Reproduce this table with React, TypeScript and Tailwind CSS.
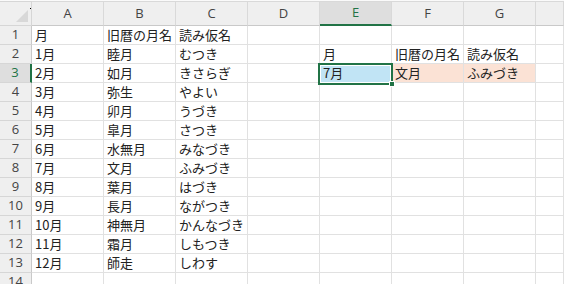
const columns = ['A', 'B', 'C', 'D', 'E', 'F', 'G', ''];

type Cell = { text?: string; fill?: string };

// シートの中身: 行番号 -> 列インデックス(0 = A) -> 値
const months = [
  ['1月', '睦月', 'むつき'],
  ['2月', '如月', 'きさらぎ'],
  ['3月', '弥生', 'やよい'],
  ['4月', '卯月', 'うづき'],
  ['5月', '皐月', 'さつき'],
  ['6月', '水無月', 'みなづき'],
  ['7月', '文月', 'ふみづき'],
  ['8月', '葉月', 'はづき'],
  ['9月', '長月', 'ながつき'],
  ['10月', '神無月', 'かんなづき'],
  ['11月', '霜月', 'しもつき'],
  ['12月', '師走', 'しわす'],
];

function buildRows(): Cell[][] {
  const rows: Cell[][] = [];
  for (let r = 0; r < 14; r++) {
    rows.push(columns.map(() => ({})));
  }
  rows[0][0] = { text: '月' };
  rows[0][1] = { text: '旧暦の月名' };
  rows[0][2] = { text: '読み仮名' };
  months.forEach((m, i) => {
    rows[i + 1][0] = { text: m[0] };
    rows[i + 1][1] = { text: m[1] };
    rows[i + 1][2] = { text: m[2] };
  });
  rows[1][4] = { text: '月' };
  rows[1][5] = { text: '旧暦の月名' };
  rows[1][6] = { text: '読み仮名' };
  rows[2][4] = { text: '7月', fill: 'bg-[#c1e4f5]' };
  rows[2][5] = { text: '文月', fill: 'bg-[#fbe2d5]' };
  rows[2][6] = { text: 'ふみづき', fill: 'bg-[#fbe2d5]' };
  return rows;
}

const ACTIVE_COL = 4;
const ACTIVE_ROW = 2;

export default function App() {
  const rows = buildRows();

  return (
    <div
      className="relative h-[284px] w-[564px] overflow-hidden bg-white text-[#222]"
      style={{ fontFamily: '"Noto Sans CJK JP", "Noto Sans", sans-serif' }}
    >
      <div className="h-[1px] bg-[#fafafa]" />
      <div className="grid grid-cols-[32px_repeat(7,72px)_1fr]">
        {/* 列見出し */}
        <div className="relative h-[25px] border-t border-r border-b border-[#d6d6d6] bg-[#efefef]">
          <div className="absolute right-[3px] bottom-[3px] h-[12px] w-[12px] bg-[#d8d8d8] [clip-path:polygon(100%_0,100%_100%,0_100%)]" />
          <div className="absolute left-[30px] top-[6px] h-[1px] w-[1px] bg-black" />
        </div>
        {columns.map((c, i) => (
          <div
            key={c || 'H'}
            className={`flex h-[25px] items-center justify-center border-t border-r border-[#d9d9d9] text-[13px] ${
              i === ACTIVE_COL
                ? 'border-b-2 border-b-[#217346] bg-[#dedede] text-[#217346]'
                : 'border-b border-b-[#c9c9c9] bg-[#efefef] text-[#444]'
            }`}
            style={{ fontFamily: '"Open Sans", "Liberation Sans", sans-serif' }}
          >
            {c}
          </div>
        ))}

        {rows.map((row, r) => (
          <Row key={r} index={r} cells={row} />
        ))}
      </div>

      {/* アクティブセル E3 の枠とフィルハンドル */}
      <div className="absolute left-[318px] top-[63px] h-[22px] w-[75px] border-2 border-[#217346] shadow-[inset_0_0_0_1px_white]" />
      <div className="absolute left-[389px] top-[81px] h-[6px] w-[6px] border border-white bg-[#217346]" />
    </div>
  );
}

function Row({ index, cells }: { index: number; cells: Cell[] }) {
  const active = index === ACTIVE_ROW;
  return (
    <>
      <div
        className={`flex h-[19px] items-center justify-center border-b border-[#d6d6d6] text-[13px] ${
          active
            ? 'border-r-2 border-r-[#217346] bg-[#dedede] text-[#217346]'
            : 'border-r border-r-[#c9c9c9] bg-[#efefef] text-[#444]'
        }`}
        style={{ fontFamily: '"Open Sans", "Liberation Sans", sans-serif' }}
      >
        {index + 1}
      </div>
      {cells.map((cell, c) => (
        <div
          key={c}
          className={`h-[19px] overflow-visible whitespace-nowrap border-r border-b border-[#e1e1e1] pl-[3px] text-[13px] leading-[18px] ${
            cell.fill ?? ''
          }`}
        >
          {cell.text}
        </div>
      ))}
    </>
  );
}
